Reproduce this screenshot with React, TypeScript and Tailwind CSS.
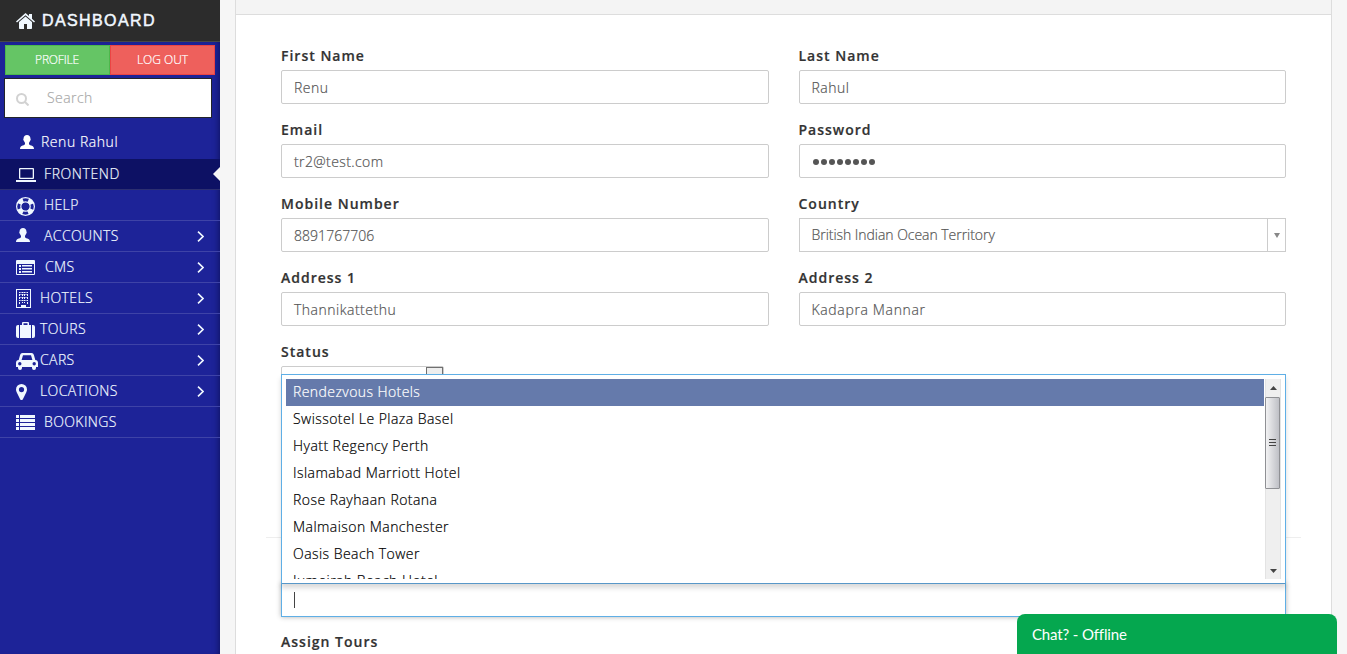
import React from "react";

type IconName = "laptop" | "ring" | "user" | "cms" | "building" | "suitcase" | "car" | "pin" | "list";

function UserIcon({ className }: { className: string }) {
  return (
    <svg viewBox="0 0 14 14" className={className} fill="currentColor">
      <path d="M7 0C4.900 0 3.600 1.400 3.600 3.200c0 .6-.4.7-.3 1.500.1.6.5.8.7 1.300.2.8.7 1.300 1 1.700v1.200C4.700 9.900 3 10.300 1.600 11 .5 11.600 0 12.500 0 14h14c0-1.500-.5-2.400-1.600-3C11 10.300 9.300 9.900 9 8.900V7.700c.3-.4.8-.9 1-1.700.2-.5.6-.7.7-1.300.1-.8-.3-.9-.3-1.500C10.400 1.400 9.100 0 7 0z" />
    </svg>
  );
}

function MenuIcon({ name }: { name: IconName }) {
  switch (name) {
    case "laptop":
      return (
        <svg viewBox="0 0 20 14" className="h-[14px] w-5" fill="currentColor">
          <path fillRule="evenodd" d="M4 0h13a1 1 0 0 1 1 1v9a1 1 0 0 1-1 1H4a1 1 0 0 1-1-1V1a1 1 0 0 1 1-1zm.3 1.300v8.400h12.400V1.300z" />
          <path d="M0 12h20v2H0z" />
        </svg>
      );
    case "ring":
      return (
        <svg viewBox="0 0 19 19" className="h-[19px] w-[19px]" fill="none" stroke="currentColor">
          <circle cx="9.500" cy="9.500" r="8.900" strokeWidth="1.200" />
          <circle cx="9.500" cy="9.500" r="4.700" strokeWidth="1.200" />
          <circle cx="9.500" cy="9.500" r="6.700" strokeWidth="4.600" strokeDasharray="5.260 5.260" strokeDashoffset="-2.630" />
        </svg>
      );
    case "user":
      return <UserIcon className="h-[14px] w-[14px]" />;
    case "cms":
      return (
        <svg viewBox="0 0 19 15" className="h-[15px] w-[19px]" fill="currentColor">
          <path fillRule="evenodd" d="M1 0h17a1 1 0 0 1 1 1v13a1 1 0 0 1-1 1H1a1 1 0 0 1-1-1V1a1 1 0 0 1 1-1zm0 4v10h17V4z" />
          <path d="M3 5h2v2H3zM3 8h2v2H3zM3 11h2v2H3zM6 5h10v1.500H6zM6 8h10v1.500H6zM6 11h10v1.500H6z" />
        </svg>
      );
    case "building":
      return (
        <svg viewBox="0 0 15 19" className="h-[19px] w-[15px]" fill="currentColor">
          <path fillRule="evenodd" d="M0 0h15v19H0zM1 1v17h4v-2h5v2h4V1z" />
          <path d="M3 3h1v1H3zM6 3h1v1H6zM8 3h1v1H8zM11 3h1v1h-1zM3 5h1v2H3zM6 5h1v2H6zM8 5h1v2H8zM11 5h1v2h-1zM3 8h1v2H3zM6 8h1v2H6zM8 8h1v2H8zM11 8h1v2h-1zM3 11h1v1H3zM6 11h1v1H6zM8 11h1v1H8zM11 11h1v1h-1zM3 13h1v2H3zM6 13h1v1H6zM8 13h1v1H8zM11 13h1v2h-1z" />
          <path opacity=".55" d="M4 3h7v1H4zM4 5h7v1H4zM4 8h7v1H4zM4 11h7v1H4z" />
        </svg>
      );
    case "suitcase":
      return (
        <svg viewBox="0 0 19 16" className="h-4 w-[19px]" fill="currentColor">
          <path d="M3 3v13H2a2 2 0 0 1-2-2V5a2 2 0 0 1 2-2zM16 3v13h1a2 2 0 0 0 2-2V5a2 2 0 0 0-2-2z" />
          <path fillRule="evenodd" d="M4 3h2V1a1 1 0 0 1 1-1h5a1 1 0 0 1 1 1v2h2v13H4zM7.500 1.300V3h4V1.300z" />
        </svg>
      );
    case "car":
      return (
        <svg viewBox="0 0 22 17" className="h-[17px] w-[22px]" fill="currentColor">
          <path fillRule="evenodd" d="M6.500 0h9c1.300 0 2 .7 2.400 2L19.300 7C21 7 22 8.200 22 9.800V14h-2v1a2 2 0 0 1-4 0v-1H6v1a2 2 0 0 1-4 0v-1H0V9.800C0 8.200 1 7 2.700 7L4.100 2C4.500.7 5.200 0 6.500 0zM7 2.200 5.600 7h10.800L15 2.200zM3.800 9a1.700 1.700 0 1 0 0 3.400 1.700 1.700 0 0 0 0-3.400zm14.400 0a1.700 1.700 0 1 0 0 3.400 1.700 1.700 0 0 0 0-3.400z" />
        </svg>
      );
    case "pin":
      return (
        <svg viewBox="0 0 11 16" className="h-4 w-[11px]" fill="currentColor">
          <path fillRule="evenodd" d="M5.500 0A5.500 5.500 0 0 1 11 5.500c0 1.300-.4 2-.8 2.900L7 15a1.600 1.600 0 0 1-3 0L.8 8.400C.4 7.500 0 6.800 0 5.500A5.500 5.500 0 0 1 5.500 0zm0 3a2.600 2.600 0 1 0 0 5.200 2.600 2.600 0 0 0 0-5.200z" />
        </svg>
      );
    case "list":
      return (
        <svg viewBox="0 0 19 15" className="h-[15px] w-[19px]" fill="currentColor">
          <path d="M0 0h3v3H0zM4 0h15v3H4zM0 4h3v3H0zM4 4h15v3H4zM0 8h3v3H0zM4 8h15v3H4zM0 12h3v3H0zM4 12h15v3H4z" />
        </svg>
      );
  }
}

const menu: { label: string; icon: IconName; slot: string; arrow?: boolean; active?: boolean }[] = [
  { label: "FRONTEND", icon: "laptop", slot: "w-7 pt-0.5", active: true },
  { label: "HELP", icon: "ring", slot: "w-7 pt-[3px]" },
  { label: "ACCOUNTS", icon: "user", slot: "w-7 pb-0.5", arrow: true },
  { label: "CMS", icon: "cms", slot: "w-[29px] pt-px", arrow: true },
  { label: "HOTELS", icon: "building", slot: "w-6 pt-px", arrow: true },
  { label: "TOURS", icon: "suitcase", slot: "w-6 pt-px", arrow: true },
  { label: "CARS", icon: "car", slot: "w-6 pt-0.5", arrow: true },
  { label: "LOCATIONS", icon: "pin", slot: "w-6 pt-px", arrow: true },
  { label: "BOOKINGS", icon: "list", slot: "w-7 pt-px" },
];

function Sidebar() {
  return (
    <aside className="flex w-[220px] shrink-0 flex-col bg-[#1d2398] text-white">
      <div className="flex h-[42px] shrink-0 items-center border-b border-[#474747] bg-[#2c2c2c] pb-px pl-4">
        <svg viewBox="0 0 19 16" className="mt-0.5 h-4 w-[19px] shrink-0" fill="#f0f8ff">
          <path d="M9.500 0 13 3V1h3v4.700L19 8.400l-1 1.100L9.500 2.300 1 9.500 0 8.400z" />
          <path d="M9.500 3.400 16 9v6.200a.8.8 0 0 1-.8.8H11v-5H8v5H3.800a.8.8 0 0 1-.8-.8V9z" />
        </svg>
        <span className="ml-[7px] mt-px font-['Liberation_Sans',sans-serif] text-[16px] leading-5 tracking-[1.4px] text-[#f0f8ff] [-webkit-text-stroke:0.5px_#f0f8ff]">DASHBOARD</span>
      </div>
      <div className="flex grow flex-col shadow-[inset_-5px_0_6px_-4px_rgba(0,0,40,0.5)]">
        <div className="mx-[5px] mt-[3px] flex h-[30px] shrink-0 text-[12px]">
          <span className="flex w-[105px] items-center justify-center border border-[#4cb84c] bg-[#65c565] pr-px tracking-[-0.2px]">PROFILE</span>
          <span className="flex w-[105px] items-center justify-center border border-[#eb4444] bg-[#ee605c]">LOG OUT</span>
        </div>
        <div className="ml-1 mt-[3px] flex h-10 w-[208px] shrink-0 items-center border border-[#22242a] bg-white pl-[11px]">
          <svg viewBox="0 0 13 13" className="mt-0.5 h-[13px] w-[13px]" fill="none" stroke="#d2d2d2" strokeWidth="2">
            <circle cx="5.500" cy="5.500" r="4.500" />
            <path d="m9 9 3.500 3.500" />
          </svg>
          <span className="-mt-px ml-[18px] text-[14px] tracking-[0.45px] text-[#aaa]">Search</span>
        </div>
        <div className="flex h-[41px] shrink-0 items-center pl-5 pt-1.5">
          <UserIcon className="h-[14px] w-[14px]" />
          <span className="ml-[7px] text-[14px] tracking-[0.55px]">Renu Rahul</span>
        </div>
        <nav className="flex flex-col text-[#f0f8ff]">
          {menu.map((m) => (
            <div
              key={m.label}
              className={
                m.active
                  ? "relative flex h-[31px] items-center border-b border-[#2c2f70] bg-[#0d1164] pl-4"
                  : "relative flex h-[31px] items-center border-b border-[#3e43a7] pl-4 pr-4"
              }
            >
              <span className={`${m.slot} flex shrink-0 items-center`}>
                <MenuIcon name={m.icon} />
              </span>
              <span className={m.active ? "text-[14px] leading-5 tracking-[0.6px]" : "text-[14px] leading-5 tracking-[0.4px]"}>{m.label}</span>
              {m.arrow && (
                <svg viewBox="0 0 7 11" className="ml-auto mt-px h-[11px] w-[7px]" fill="none" stroke="currentColor" strokeWidth="1.600">
                  <path d="m1 .7 5 4.800-5 4.800" />
                </svg>
              )}
              {m.active && (
                <svg viewBox="0 0 7 14" className="absolute right-0 top-2 h-[14px] w-[7px]" fill="#f6f6f6">
                  <path d="M7 0v14L0 7z" />
                </svg>
              )}
            </div>
          ))}
        </nav>
      </div>
    </aside>
  );
}

const fields = [
  ["First Name", "Renu"],
  ["Last Name", "Rahul"],
  ["Email", "tr2@test.com"],
  ["Password", "password"],
  ["Mobile Number", "8891767706"],
  ["Country", "British Indian Ocean Territory"],
  ["Address 1", "Thannikattethu"],
  ["Address 2", "Kadapra Mannar"],
];

function Label({ children }: { children: React.ReactNode }) {
  return <div className="h-6 text-[14px] font-semibold leading-5 tracking-[1px] text-[#333]">{children}</div>;
}

function valueTracking(label: string) {
  if (label === "Mobile Number") return "tracking-[0.05px]";
  if (label === "Email") return "tracking-[0.4px]";
  if (label === "Address 2") return "tracking-[0.65px]";
  return "tracking-[0.5px]";
}

function Field({ label, value }: { label: string; value: string }) {
  return (
    <div className="h-[74px]">
      <Label>{label}</Label>
      {label === "Country" ? (
        <div className="flex h-[34px] items-stretch border border-[#ccc] text-[#555]">
          <span className="grow pl-3 text-[14px] leading-8 tracking-[-0.04px]">{value}</span>
          <span className="flex w-[18px] items-center justify-center border-l border-[#ccc]">
            <svg viewBox="0 0 6 5" className="h-[5px] w-1.5" fill="#888">
              <path d="M0 0h6L3 5z" />
            </svg>
          </span>
        </div>
      ) : (
        <div className="flex h-[34px] items-center rounded-[2px] border border-[#ccc] pl-3 text-[14px] text-[#555]">
          {label === "Password" ? (
            <span className="flex gap-[1.5px] pl-px pt-0.5">
              {Array.from(value).map((_, i) => (
                <span key={i} className="h-[6.500px] w-[6.5px] rounded-full bg-[#555]" />
              ))}
            </span>
          ) : (
            <span className={valueTracking(label)}>{value}</span>
          )}
        </div>
      )}
    </div>
  );
}

const hotels = [
  "Rendezvous Hotels",
  "Swissotel Le Plaza Basel",
  "Hyatt Regency Perth",
  "Islamabad Marriott Hotel",
  "Rose Rayhaan Rotana",
  "Malmaison Manchester",
  "Oasis Beach Tower",
  "Jumeirah Beach Hotel",
];

function HotelPicker() {
  return (
    <div className="relative h-[34px] border border-[#5fafe6] bg-white shadow-[0_0_5px_rgba(0,0,0,0.3)]">
      <div className="flex h-8 items-center pl-3">
        <span className="h-4 w-px bg-[#444]" />
      </div>
      <div className="absolute -left-px -right-px bottom-[32px] flex h-[210px] border border-[#5fafe6] border-b-[#5897c8] bg-white p-1 shadow-[0_4px_5px_rgba(0,0,0,0.15)]">
        <div className="h-[200px] grow overflow-hidden">
          {hotels.map((h, i) => (
            <div
              key={h}
              className={
                i === 0
                  ? "h-[27px] bg-[#657aab] pl-[7px] text-[14px] leading-[26px] tracking-[0.42px] text-white"
                  : "h-[27px] pl-[7px] text-[14px] leading-[26px] tracking-[0.45px] text-black"
              }
            >
              {h}
            </div>
          ))}
        </div>
        <div className="ml-px flex h-[200px] w-4 flex-col items-center border-x border-[#e3e3e3] bg-[#efefef]">
          <svg viewBox="0 0 7 4" className="mt-[7px] h-1 w-[7px] shrink-0" fill="#444">
            <path d="M3.500 0 7 4H0z" />
          </svg>
          <div className="-ml-px mt-[7px] flex h-[92px] w-[15px] shrink-0 flex-col items-start justify-center rounded-[1px] border border-[#8f9094] bg-linear-to-r from-[#f2f2f3] to-[#bfc0c6] pb-px pl-[3px]">
            <span className="mb-0.5 h-px w-[7px] bg-[#444]" />
            <span className="mb-0.5 h-px w-[7px] bg-[#444]" />
            <span className="h-px w-[7px] bg-[#444]" />
          </div>
          <svg viewBox="0 0 7 4" className="mb-1.5 mt-auto h-1 w-[7px] shrink-0" fill="#444">
            <path d="M0 0h7L3.500 4z" />
          </svg>
        </div>
      </div>
    </div>
  );
}

export default function App() {
  return (
    <div className="relative flex h-[654px] w-[1347px] overflow-hidden bg-[#f6f6f6] font-['Open_Sans',sans-serif] font-light [-webkit-text-stroke:0.2px_currentColor]">
      <Sidebar />
      <main className="ml-[15px] h-full w-[1097px] border-x border-[#ddd] bg-white">
        <div className="h-[15px] border-b border-[#ddd] bg-[#f4f4f4]" />
        <div className="px-[45px] pt-[31px]">
          <div className="grid grid-cols-2 gap-x-[30px]">
            {fields.map(([label, value]) => (
              <Field key={label} label={label} value={value} />
            ))}
          </div>
          <div className="h-[195px]">
            <Label>Status</Label>
            <div className="flex h-[34px] w-[163px] justify-end rounded-[2px] border border-[#ccc]">
              <span className="h-8 w-[17px] border border-[#707070] bg-[#eee]" />
            </div>
          </div>
          <div className="-mx-[15px] border-t border-[#eee]" />
          <div className="pt-[45px]">
            <HotelPicker />
          </div>
          <div className="pt-[15px]">
            <Label>Assign Tours</Label>
          </div>
        </div>
      </main>
      <div className="absolute bottom-0 right-[10px] h-10 w-80 rounded-t-[8px] bg-[#05a74f] pl-[15px] font-['Lato',sans-serif] text-[15px] font-normal leading-[41px] tracking-[-0.15px] text-white [-webkit-text-stroke:0]">
        Chat? - Offline
      </div>
    </div>
  );
}
